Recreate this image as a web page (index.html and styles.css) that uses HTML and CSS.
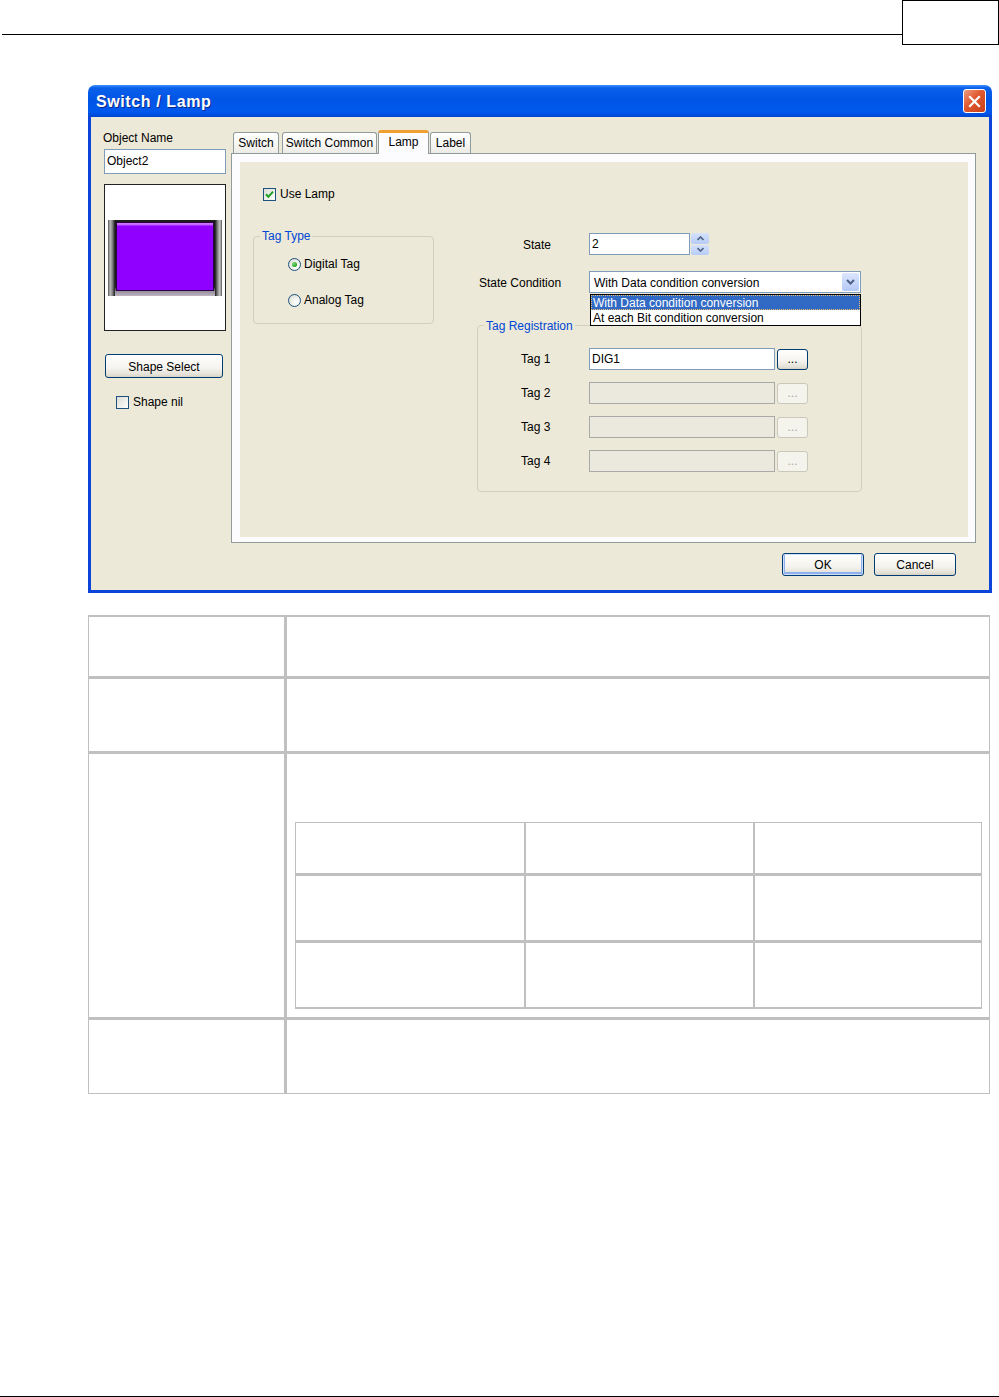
FILE: index.html
```html
<!DOCTYPE html>
<html>
<head>
<meta charset="utf-8">
<title>Switch / Lamp</title>
<link rel="stylesheet" href="styles.css">
</head>
<body>
<header class="hdr"><div class="hdr-line"></div><div class="hdr-box"></div></header>

<div class="dialog">
  <div class="titlebar">
    <span class="title">Switch / Lamp</span>
    <span class="close"><svg width="13" height="13" viewBox="0 0 13 13"><path d="M2 2L11 11M11 2L2 11" stroke="#fff" stroke-width="2.2" stroke-linecap="square"/></svg></span>
  </div>
  <div class="dbody">
    <div class="main">
      <div class="leftcol">
        <div class="lbl">Object Name</div>
        <div class="tbox name">Object2</div>
        <div class="preview">
          <div class="lamp"><div class="side l"></div><div class="face"></div><div class="side r"></div></div>
        </div>
        <div class="btn shape">Shape Select</div>
        <div class="chk nil"><span class="cb"></span>Shape nil</div>
      </div>
      <div class="tabarea">
        <div class="tabs">
          <div class="tab t-switch">Switch</div>
          <div class="tab t-common">Switch Common</div>
          <div class="tab t-lamp active">Lamp</div>
          <div class="tab t-label">Label</div>
        </div>
        <div class="panel">
          <div class="pinner">
            <div class="chk uselamp"><span class="cb"><svg width="9" height="9" viewBox="0 0 9 9"><path d="M1 4.3L3.4 6.8L8 1.6" fill="none" stroke="#21A121" stroke-width="2"/></svg></span>Use Lamp</div>
            <div class="cols">
              <fieldset class="grp tagtype">
                <legend>Tag Type</legend>
                <div class="radio r1"><span class="rb on"></span>Digital Tag</div>
                <div class="radio r2"><span class="rb"></span>Analog Tag</div>
              </fieldset>
              <div class="rcol">
                <div class="frow">
                  <span class="flbl st-lbl">State</span>
                  <div class="tbox st">2</div>
                  <div class="spin">
                    <span class="sp up"><svg width="7" height="5" viewBox="0 0 7 5"><path d="M0.5 4L3.5 1L6.5 4" fill="none" stroke="#4D6185" stroke-width="1.6"/></svg></span>
                    <span class="sp dn"><svg width="7" height="5" viewBox="0 0 7 5"><path d="M0.5 1L3.5 4L6.5 1" fill="none" stroke="#4D6185" stroke-width="1.6"/></svg></span>
                  </div>
                </div>
                <div class="frow cond">
                  <span class="flbl sc-lbl">State Condition</span>
                  <div class="combo"><span class="ctext">With Data condition conversion</span><span class="drop"><svg width="9" height="6" viewBox="0 0 9 6"><path d="M1 1L4.5 4.5L8 1" fill="none" stroke="#4D6185" stroke-width="2"/></svg></span></div>
                  <div class="dlist">
                    <div class="ditem sel">With Data condition conversion</div>
                    <div class="ditem">At each Bit condition conversion</div>
                  </div>
                </div>
                <fieldset class="grp tagreg">
                  <legend>Tag Registration</legend>
                  <div class="trow first"><span class="tlbl">Tag 1</span><div class="tbox tin">DIG1</div><div class="btn dots">...</div></div>
                  <div class="trow"><span class="tlbl">Tag 2</span><div class="tbox tin dis"></div><div class="btn dots dis">...</div></div>
                  <div class="trow"><span class="tlbl">Tag 3</span><div class="tbox tin dis"></div><div class="btn dots dis">...</div></div>
                  <div class="trow"><span class="tlbl">Tag 4</span><div class="tbox tin dis"></div><div class="btn dots dis">...</div></div>
                </fieldset>
              </div>
            </div>
          </div>
        </div>
      </div>
    </div>
    <div class="btnrow">
      <div class="btn dlg ok">OK</div>
      <div class="btn dlg">Cancel</div>
    </div>
  </div>
</div>

<table class="t1">
  <tr class="a1"><td class="c1"><div class="sp1"></div></td><td></td></tr>
  <tr class="a2"><td class="c1"><div class="sp2"></div></td><td></td></tr>
  <tr class="a3"><td class="c1"></td><td class="inner">
    <table class="t2">
      <tr class="b1"><td><div class="q1"></div></td><td></td><td></td></tr>
      <tr class="b2"><td><div class="q2"></div></td><td></td><td></td></tr>
      <tr class="b3"><td><div class="q2"></div></td><td></td><td></td></tr>
    </table>
  </td></tr>
  <tr class="a4"><td class="c1"><div class="sp4"></div></td><td></td></tr>
</table>

<footer class="foot"></footer>
</body>
</html>
```

FILE: styles.css
```css
html, body {
  margin: 0;
  padding: 0;
  background: #fff;
}
body {
  font-family: "Liberation Sans", Arial, sans-serif;
  font-size: 12px;
  color: #000;
  width: 999px;
}

/* page header */
.hdr {
  display: flex;
  align-items: flex-start;
  height: 45px;
}
.hdr-line {
  flex: 1;
  margin-left: 2px;
  height: 34px;
  border-bottom: 1px solid #000;
}
.hdr-box {
  width: 97px;
  height: 45px;
  box-sizing: border-box;
  border: 1px solid #000;
}

/* dialog */
.dialog {
  margin: 40px 0 0 88px;
  width: 904px;
}
.titlebar {
  height: 32px;
  box-sizing: border-box;
  border-radius: 7px 7px 0 0;
  background: linear-gradient(#3D95FF 0, #0A5FEA 9%, #0055E5 45%, #0058EE 85%, #0046CF 100%);
  display: flex;
  align-items: center;
  justify-content: space-between;
  padding: 0 6px 0 8px;
}
.title {
  color: #fff;
  font-weight: bold;
  font-size: 16px;
  letter-spacing: 0.6px;
  text-shadow: 1px 1px 0 #0A2A8A;
  padding-top: 1px;
}
.close {
  width: 23px;
  height: 24px;
  box-sizing: border-box;
  border: 1px solid #fff;
  border-radius: 3px;
  background: linear-gradient(135deg, #EE9C80 0%, #E0582D 45%, #C8401A 100%);
  display: flex;
  align-items: center;
  justify-content: center;
}
.dbody {
  background: #ECE9D8;
  border: 3px solid #0B44D8;
  border-top: 0;
  padding: 13px 13px 14px 13px;
}
.main {
  display: flex;
  gap: 5px;
}

/* left column */
.leftcol {
  width: 122px;
}
.lbl {
  line-height: 15px;
  margin-left: -1px;
  padding-top: 1px;
  height: 14px;
}
.tbox {
  box-sizing: border-box;
  border: 1px solid #7F9DB9;
  background: #fff;
  line-height: 15px;
}
.tbox.name {
  margin-top: 4px;
  height: 25px;
  padding: 4px 2px;
}
.preview {
  margin-top: 10px;
  height: 147px;
  box-sizing: border-box;
  border: 1px solid #222;
  background: #fff;
  padding: 35px 0 0 3px;
}
.lamp {
  width: 114px;
  height: 76px;
  display: flex;
  background: linear-gradient(#1c1c1c 88%, #9a8fa0 94%, #bdb5c0 100%);
}
.lamp .side {
  width: 7px;
}
.lamp .side.l {
  background: linear-gradient(90deg, #555 0, #b9b9b9 30%, #8a8a8a 60%, #1a1a1a 100%);
}
.lamp .side.r {
  background: linear-gradient(90deg, #1a1a1a 0, #8a8a8a 40%, #c9c9c9 70%, #555 100%);
}
.lamp .face {
  flex: 1;
  margin: 2px 1px 5px;
  border: 1px solid #2a0048;
  background: linear-gradient(#D27DFF 0, #C060FF 2px, #9000FF 3px, #8E00FF 100%);
}
.btn {
  box-sizing: border-box;
  border: 1px solid #003C74;
  border-radius: 3px;
  background: linear-gradient(#FFFFFF 0, #F4F3EE 60%, #E3E0D6 90%, #D6D0C5 100%);
  display: flex;
  align-items: center;
  justify-content: center;
}
.btn.shape {
  margin: 23px 0 0 1px;
  width: 118px;
  height: 24px;
  padding-top: 1px;
}
.chk {
  display: flex;
  align-items: center;
  height: 14px;
  gap: 4px;
}
.cb {
  width: 13px;
  height: 13px;
  box-sizing: border-box;
  border: 1px solid #1C5180;
  background: linear-gradient(135deg, #DCDCD7 0, #F4F4F0 70%, #fff 100%);
  display: flex;
  align-items: center;
  justify-content: center;
}
.chk.nil {
  margin: 17px 0 0 12px;
}

/* tabs */
.tabarea {
  width: 745px;
}
.tabs {
  display: flex;
  align-items: flex-end;
  height: 23px;
  padding-left: 2px;
}
.tab {
  height: 21px;
  box-sizing: border-box;
  border: 1px solid #919B9C;
  border-bottom: 0;
  border-radius: 3px 3px 0 0;
  background: linear-gradient(#FFFFFF 0, #F7F7F4 50%, #ECEBE6 100%);
  line-height: 21px;
  text-align: center;
}
.t-switch { width: 46px; margin-right: 3px; }
.t-common { width: 95px; margin-right: 1px; }
.t-lamp { width: 51px; margin-right: 1px; }
.t-label { width: 41px; }
.tab.active {
  height: 24px;
  margin-bottom: -1px;
  background: #FCFCFE;
  border-top: 3px solid #F0A030;
  line-height: 18px;
  position: relative;
  z-index: 1;
}
.panel {
  height: 390px;
  box-sizing: border-box;
  border: 1px solid #919B9C;
  background: #FCFCFE;
  padding: 8px 7px 5px 8px;
}
.pinner {
  background: #ECE9D8;
  height: 100%;
}
.chk.uselamp {
  padding: 25px 0 0 23px;
}
.cols {
  display: flex;
  align-items: flex-start;
  margin-top: 28px;
}

/* group boxes */
.grp {
  margin: 0;
  padding: 0;
  box-sizing: border-box;
  border: 1px solid #D0D0BF;
  border-radius: 4px;
  min-width: 0;
}
.grp legend {
  padding: 0 2px;
  margin-left: 6px;
  color: #0046D5;
  line-height: 14px;
}
.tagtype {
  margin-left: 13px;
  width: 181px;
  height: 95px;
}
.radio {
  display: flex;
  align-items: center;
  height: 14px;
  gap: 3px;
  margin-left: 34px;
}
.radio.r1 { margin-top: 14px; }
.radio.r2 { margin-top: 22px; }
.rb {
  width: 13px;
  height: 13px;
  box-sizing: border-box;
  border: 1px solid #1C5180;
  border-radius: 50%;
  background: radial-gradient(circle at 65% 65%, #fff 0, #F2F2EC 40%, #D4D4CC 100%);
  display: flex;
  align-items: center;
  justify-content: center;
}
.rb.on::after {
  content: "";
  width: 5px;
  height: 5px;
  border-radius: 50%;
  background: radial-gradient(circle at 35% 35%, #7EDB7E 0, #21A121 70%);
}

/* right column */
.rcol {
  margin-left: 43px;
  width: 385px;
  padding-top: 4px;
}
.frow {
  display: flex;
  align-items: center;
  height: 22px;
}
.flbl {
  width: 112px;
  box-sizing: border-box;
  padding-top: 2px;
}
.st-lbl { padding-left: 46px; }
.sc-lbl { padding-left: 2px; }
.tbox.st {
  width: 101px;
  height: 22px;
  padding: 3px 2px;
}
.spin {
  margin-left: 1px;
  width: 18px;
  height: 22px;
  display: flex;
  flex-direction: column;
  gap: 1px;
}
.sp {
  flex: 1;
  border-radius: 2px;
  background: linear-gradient(#D6E2FC, #B6CBF7);
  display: flex;
  align-items: center;
  justify-content: center;
}
.frow.cond {
  margin-top: 16px;
  position: relative;
}
.combo {
  width: 272px;
  height: 22px;
  box-sizing: border-box;
  border: 1px solid #7F9DB9;
  background: #fff;
  display: flex;
  align-items: center;
  justify-content: space-between;
  padding: 0 1px 0 4px;
}
.ctext {
  padding-top: 1px;
}
.drop {
  width: 17px;
  height: 18px;
  border-radius: 2px;
  background: linear-gradient(#DCE6FD, #B4C8F6);
  display: flex;
  align-items: center;
  justify-content: center;
}
.dlist {
  position: absolute;
  left: 113px;
  top: 23px;
  width: 271px;
  box-sizing: border-box;
  border: 1px solid #000;
  background: #fff;
  z-index: 2;
}
.ditem {
  height: 15px;
  line-height: 16px;
  padding-left: 2px;
}
.ditem.sel {
  background: #316AC5;
  color: #fff;
  outline: 1px dotted #F0C070;
  outline-offset: -1px;
}
.tagreg {
  margin-top: 25px;
  width: 385px;
  height: 174px;
}
.tagreg legend {
  padding-top: 1px;
}
.trow {
  display: flex;
  align-items: center;
  height: 22px;
  margin-top: 12px;
}
.trow.first { margin-top: 15px; }
.tlbl {
  width: 111px;
  box-sizing: border-box;
  padding-left: 43px;
}
.tbox.tin {
  width: 186px;
  height: 22px;
  padding: 3px 2px;
}
.tbox.tin.dis {
  background: #EBE9DE;
  border-color: #A9A9A6;
}
.btn.dots {
  margin-left: 2px;
  width: 31px;
  height: 21px;
  line-height: 10px;
  align-items: flex-end;
  padding-bottom: 5px;
}
.btn.dots.dis {
  border-color: #CAC8BB;
  background: #F4F3EC;
  color: #ACA899;
}

/* dialog buttons */
.btnrow {
  display: flex;
  justify-content: flex-end;
  gap: 10px;
  margin-top: 10px;
  padding-right: 20px;
}
.btn.dlg {
  width: 82px;
  height: 23px;
  padding-top: 1px;
}
.btn.ok {
  box-shadow: inset 0 0 0 1px #CEE1FB, inset 0 -1px 0 2px #8FB0EC;
}

/* document tables */
.t1 {
  margin: 22px 0 0 88px;
  width: 902px;
  border-collapse: separate;
  border-spacing: 0;
  border: 1px solid #C0C0C0;
  border-top-width: 2px;
  table-layout: fixed;
}
.t1 td {
  padding: 0;
  vertical-align: top;
}
.t1 td.c1 {
  width: 195px;
  border-right: 3px solid #C0C0C0;
}
.t1 tr + tr > td {
  border-top: 3px solid #C0C0C0;
}
.sp1 { height: 59px; }
.sp2 { height: 72px; }
.sp4 { height: 73px; }
.t1 td.inner {
  padding: 68px 7px 8px 8px;
}
.t2 {
  width: 687px;
  border-collapse: separate;
  border-spacing: 0;
  border: 1px solid #C0C0C0;
  border-bottom-width: 2px;
  table-layout: fixed;
}
.t2 td {
  padding: 0;
  vertical-align: top;
}
.t2 td + td {
  border-left: 2px solid #C0C0C0;
}
.t2 tr + tr > td {
  border-top: 3px solid #C0C0C0;
}
.q1 { height: 50px; }
.q2 { height: 64px; }

.foot {
  margin-top: 302px;
  border-top: 1px solid #000;
}
```
